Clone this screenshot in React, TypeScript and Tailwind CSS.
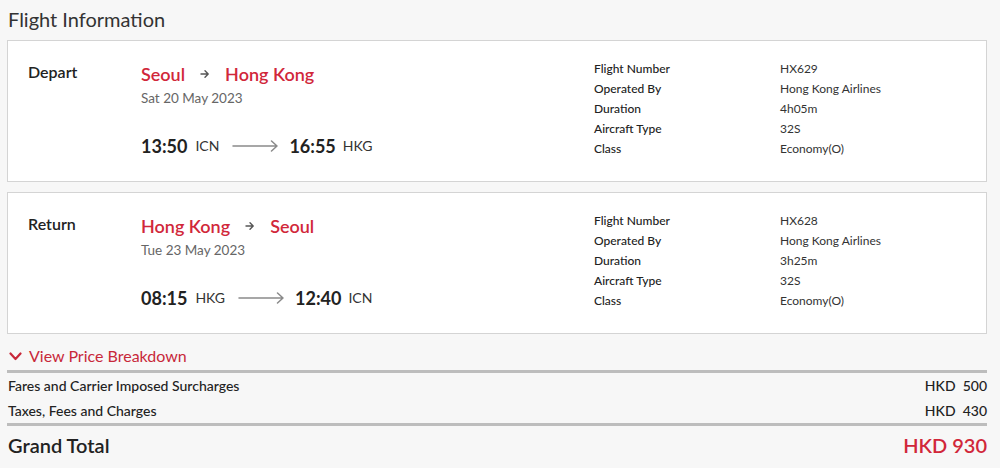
import React from "react";

type Leg = {
  label: string;
  from: string;
  to: string;
  date: string;
  depTime: string;
  depCode: string;
  arrTime: string;
  arrCode: string;
  details: [string, string][];
};

const legs: Leg[] = [
  {
    label: "Depart",
    from: "Seoul",
    to: "Hong Kong",
    date: "Sat 20 May 2023",
    depTime: "13:50",
    depCode: "ICN",
    arrTime: "16:55",
    arrCode: "HKG",
    details: [
      ["Flight Number", "HX629"],
      ["Operated By", "Hong Kong Airlines"],
      ["Duration", "4h05m"],
      ["Aircraft Type", "32S"],
      ["Class", "Economy(O)"],
    ],
  },
  {
    label: "Return",
    from: "Hong Kong",
    to: "Seoul",
    date: "Tue 23 May 2023",
    depTime: "08:15",
    depCode: "HKG",
    arrTime: "12:40",
    arrCode: "ICN",
    details: [
      ["Flight Number", "HX628"],
      ["Operated By", "Hong Kong Airlines"],
      ["Duration", "3h25m"],
      ["Aircraft Type", "32S"],
      ["Class", "Economy(O)"],
    ],
  },
];

function SmallArrow() {
  return (
    <svg width="10" height="10" viewBox="0 0 10 10" className="mx-[15px]">
      <path d="M1 5h7M5 1.8L8.2 5L5 8.2" fill="none" stroke="#555" strokeWidth="1.4" strokeLinecap="round" strokeLinejoin="round" />
    </svg>
  );
}

function LongArrow() {
  return (
    <svg width="47" height="12" viewBox="0 0 47 12" className="ml-[13px] mr-[10px]">
      <path d="M1 6h44M39.5 1L45 6L39.5 11" fill="none" stroke="#8a8a8a" strokeWidth="1.5" strokeLinecap="round" strokeLinejoin="round" />
    </svg>
  );
}

function LegCard({ leg }: { leg: Leg }) {
  return (
    <div className="flex h-[142px] border border-[#d4d4d4] bg-white pt-[18px]">
      <div className="mt-[3px] w-[133px] pl-[20px] text-[16px] font-semibold leading-[20px] text-[#222]">{leg.label}</div>
      <div className="mt-[3px] w-[453px]">
        <div className="flex items-center text-[18px] font-semibold leading-[24px] text-[#d1273a]">
          <span>{leg.from}</span>
          <SmallArrow />
          <span>{leg.to}</span>
        </div>
        <div className="mt-[3px] text-[13.5px] leading-[18px] text-[#666]">{leg.date}</div>
        <div className="mt-[27px] flex items-center leading-[24px]">
          <span className="text-[18px] font-bold text-[#222]">{leg.depTime}</span>
          <span className="ml-[8px] text-[14px] text-[#333]">{leg.depCode}</span>
          <LongArrow />
          <span className="text-[18px] font-bold text-[#222]">{leg.arrTime}</span>
          <span className="ml-[7px] text-[14px] text-[#333]">{leg.arrCode}</span>
        </div>
      </div>
      <div className="flex flex-col">
        {leg.details.map(([k, v]) => (
          <div key={k} className="flex text-[12px] leading-[20px] text-[#222]">
            <span className="w-[186px] font-medium">{k}</span>
            <span className="text-[#333]">{v}</span>
          </div>
        ))}
      </div>
    </div>
  );
}

export default function App() {
  return (
    <div className="min-h-[468px] w-[1000px] bg-[#f7f7f7] pl-[7px] pr-[13px] font-['Lato','Liberation_Sans',sans-serif] text-[#222]">
      <h1 className="pl-[1px] pt-[6px] text-[20px] leading-[26px] text-[#333]">Flight Information</h1>
      <div className="mt-[8px] flex flex-col gap-[10px]">
        {legs.map((leg) => (
          <LegCard key={leg.label} leg={leg} />
        ))}
      </div>
      <button type="button" className="mt-[12px] flex items-center gap-[7px] pl-[2px] text-[16px] leading-[20px] text-[#c8283a]">
        <svg width="13" height="9" viewBox="0 0 13 9">
          <path d="M1.5 1.5L6.5 7L11.5 1.5" fill="none" stroke="#c8283a" strokeWidth="2.2" strokeLinecap="round" strokeLinejoin="round" />
        </svg>
        View Price Breakdown
      </button>
      <div className="mt-[4px] h-[3px] bg-[#bdbdbd]" />
      <div className="pl-[1px] pt-[3px] text-[14px] font-medium leading-[20px] text-[#222]">
        <div className="flex justify-between">
          <span>Fares and Carrier Imposed Surcharges</span>
          <span>HKD&nbsp;&nbsp;500</span>
        </div>
        <div className="mt-[5px] flex justify-between">
          <span>Taxes, Fees and Charges</span>
          <span>HKD&nbsp;&nbsp;430</span>
        </div>
      </div>
      <div className="mt-[2px] h-[3px] bg-[#bdbdbd]" />
      <div className="flex justify-between pl-[1px] pt-[5px] text-[20px] font-semibold leading-[28px]">
        <span className="text-[#222]">Grand Total</span>
        <span className="text-[#d1273a]">HKD 930</span>
      </div>
    </div>
  );
}
